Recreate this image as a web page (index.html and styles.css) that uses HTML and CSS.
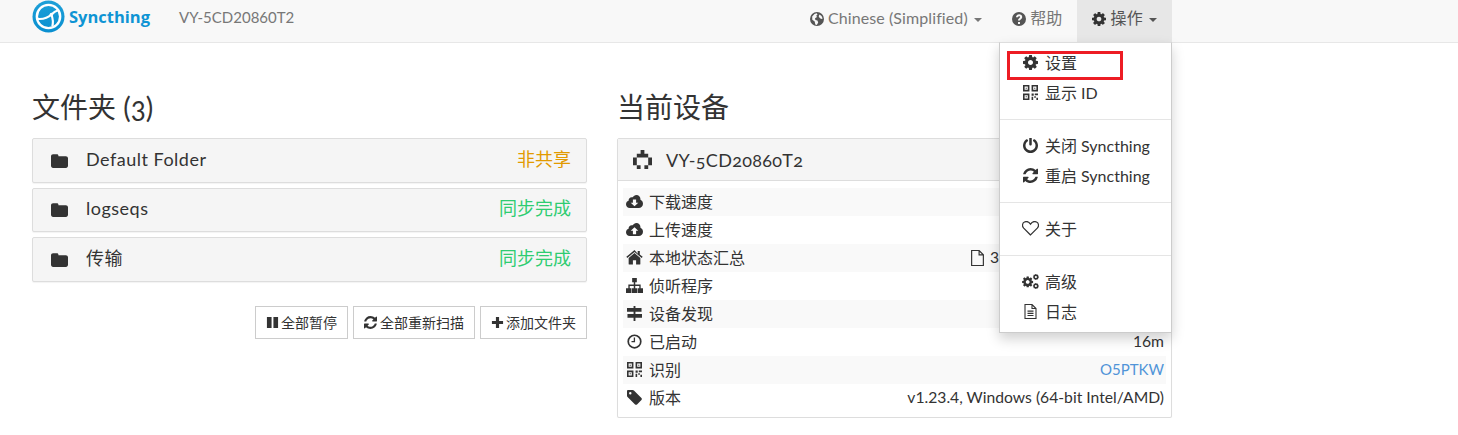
FILE: index.html
```html
<!DOCTYPE html>
<html>
<head>
    <title>Syncthing</title>
    <meta name="viewport" content="width=device-width, initial-scale=1">
    <link rel="stylesheet" href="styles.css">
</head>
<body>
    <svg class="defs" width="0" height="0">
        <symbol id="i-gear" viewBox="128 128 1536 1536"><path d="M1152 896q0-106-75-181t-181-75-181 75-75 181 75 181 181 75 181-75 75-181zm512-109v222q0 12-8 23t-20 13l-185 28q-19 54-39 91 35 50 107 138 10 12 10 25t-9 23q-27 37-99 108t-94 71q-12 0-26-9l-138-108q-44 23-91 38-16 136-29 186-7 28-36 28h-222q-14 0-24.500-8.500t-11.500-21.500l-28-184q-49-16-90-37l-141 107q-10 9-25 9-14 0-25-11-126-114-165-168-7-10-7-23 0-12 8-23 15-21 51-66.500t54-70.500q-27-50-41-99l-183-27q-13-2-21-12.500t-8-23.500v-222q0-12 8-23t19-13l186-28q14-46 39-92-40-57-107-138-10-12-10-24 0-10 9-23 26-36 98.500-107.500t94.500-71.500q13 0 26 10l138 107q44-23 91-38 16-136 29-186 7-28 36-28h222q14 0 24.500 8.500t11.500 21.500l28 184q49 16 90 37l142-107q9-9 24-9 13 0 25 10 129 119 165 170 7 8 7 22 0 12-8 23-15 21-51 66.500t-54 70.500q26 50 41 98l183 28q13 2 21 12.500t8 23.500z"/></symbol>
        <symbol id="i-power" viewBox="128 128 1536 1536"><path d="M1664 896q0 156-61 298t-164 245-245 164-298 61-298-61-245-164-164-245-61-298q0-182 80.500-343t226.500-270q43-32 95.500-25t83.500 50q32 42 24.500 94.500t-49.500 84.500q-98 74-151.500 181t-53.500 228q0 104 40.500 198.500t109.500 163.500 163.500 109.500 198.500 40.500 198.500-40.500 163.500-109.500 109.500-163.500 40.500-198.500q0-121-53.500-228t-151.500-181q-42-32-49.500-84.500t24.500-94.500q31-43 84-50t95 25q146 109 226.500 270t80.500 343zm-640-768v640q0 52-38 90t-90 38-90-38-38-90v-640q0-52 38-90t90-38 90 38 38 90z"/></symbol>
        <symbol id="i-refresh" viewBox="128 128 1536 1536"><path d="M1639 1056q0 5-1 7-64 268-268 434.500t-478 166.500q-146 0-282.500-55t-243.500-157l-129 129q-19 19-45 19t-45-19-19-45v-448q0-26 19-45t45-19h448q26 0 45 19t19 45-19 45l-137 137q71 66 161 102t187 36q134 0 250-65t186-179q11-17 53-117 8-23 30-23h192q13 0 22.500 9.500t9.500 22.500zm25-800v448q0 26-19 45t-45 19h-448q-26 0-45-19t-19-45 19-45l138-138q-148-137-349-137-134 0-250 65t-186 179q-11 17-53 117-8 23-30 23h-199q-13 0-22.500-9.500t-9.500-22.500v-7q65-268 270-434.500t480-166.500q146 0 284 55.500t245 156.500l130-129q19-19 45-19t45 19 19 45z"/></symbol>
        <symbol id="i-qr" viewBox="1 1 14 14"><path fill-rule="evenodd" d="M1 1h6v6H1zM2.500 2.500v3h3v-3zM9 1h6v6H9zM10.500 2.500v3h3v-3zM1 9h6v6H1zM2.500 10.500v3h3v-3z"/><path d="M3.500 3.500h1v1h-1zM11.500 3.500h1v1h-1zM3.500 11.500h1v1h-1zM9 9h2v2H9zM12 9h3v1.500h-3zM9 12h1.500v3H9zM11.500 11.500h1.500v1.500h-1.500zM13.500 13h1.500v2h-1.500z"/></symbol>
        <symbol id="i-heart" viewBox="0.500 2 15 13"><path fill="none" stroke="currentColor" stroke-width="1.100" d="M8 14.200 2 8.200C.3 6.400.7 3.700 2.700 2.800c1.900-.9 3.900-.2 5.300 1.800 1.400-2 3.400-2.700 5.300-1.800 2 .9 2.400 3.600.7 5.400z"/></symbol>
        <symbol id="i-cogs" viewBox="0 0 18 16"><use href="#i-gear" x="0" y="2.500" width="12" height="12"/><use href="#i-gear" x="11.500" y="0" width="6.500" height="6.500"/><use href="#i-gear" x="11.500" y="9.500" width="6.500" height="6.500"/></symbol>
        <symbol id="i-filetext" viewBox="2 0.500 12 15"><path fill="none" stroke="currentColor" stroke-width="1.100" d="M2.500 1h7l4 4v10h-11zM9.500 1v4h4"/><path d="M5 7h6v1.200H5zM5 9.200h6v1.200H5zM5 11.400h6v1.200H5z"/></symbol>
        <symbol id="i-file" viewBox="2 0.500 12 15"><path fill="none" stroke="currentColor" stroke-width="1.100" d="M2.500 1h7l4 4v10h-11zM9.500 1v4h4"/></symbol>
        <symbol id="i-folder" viewBox="0 0 16 14"><path d="M2 1h3.500c1 0 1.500.5 1.500 1.500V3h7c1 0 2 .8 2 1.800V12c0 1-.8 2-2 2H2c-1.200 0-2-1-2-2V3c0-1.200.8-2 2-2z"/></symbol>
        <symbol id="i-down" viewBox="0 0 18 14"><path fill-rule="evenodd" d="M4 14C1.800 14 0 12.300 0 10c0-1.800 1-3.200 2.700-3.800C2.700 3.500 4.800 2 7 2.600 8 1 9.400 0 11 0c2.500 0 4.300 1.900 4.300 4.400v.7C17 5.800 18 7.500 18 9.500c0 2.500-2 4.500-4.500 4.500zM7.300 5v3.300H5L9 12l4-3.700h-2.300V5z"/></symbol>
        <symbol id="i-up" viewBox="0 0 18 14"><path fill-rule="evenodd" d="M4 14C1.800 14 0 12.300 0 10c0-1.800 1-3.200 2.700-3.800C2.700 3.500 4.800 2 7 2.600 8 1 9.400 0 11 0c2.500 0 4.300 1.900 4.300 4.400v.7C17 5.800 18 7.500 18 9.500c0 2.500-2 4.500-4.500 4.500zM9 4.500 5 8.200h2.300V12h3.400V8.200H13z"/></symbol>
        <symbol id="i-home" viewBox="0 0 16 14"><path d="M8 2.800 2.500 7.500V13c0 .4.300.7.700.7h3.300V9.500h3V13.700h3.300c.4 0 .7-.3.700-.7V7.500z"/><path d="M8 0 .3 6.400l.9 1L8 1.900l6.800 5.500.9-1-2.700-2.200V.8h-2v2.700z"/></symbol>
        <symbol id="i-sitemap" viewBox="0 0 16 14"><path d="M5.800 0h4.400v4H8.700v2h5.100v3.500H16V14h-5V9.500h1.500V7.500h-3.800v2H10.500V14h-5V9.500h1.800v-2H3.500v2H5V14H0V9.500h2.200V6h5.100V4H5.800z"/></symbol>
        <symbol id="i-signs" viewBox="0 0 16 16"><path d="M7 0h2v2h6.500v4H9v2.500h7v4H9V16H7v-3.500H.5v-4H7V6H0V2h7z"/></symbol>
        <symbol id="i-clock" viewBox="0 0 16 16"><circle cx="8" cy="8" r="6.700" fill="none" stroke="currentColor" stroke-width="1.800"/><path d="M7.200 3.800h1.400v5H4.800V7.500h2.400z"/></symbol>
        <symbol id="i-tag" viewBox="0 0 16 16"><path fill-rule="evenodd" d="M0 1.200C0 .5.500 0 1.200 0H6c.5 0 1 .2 1.400.6l8 8c.6.6.6 1.500 0 2.100l-4.700 4.700c-.6.600-1.500.600-2.100 0l-8-8C.2 7 0 6.500 0 6zM3.500 2.200a1.300 1.300 0 1 0 0 2.600 1.300 1.300 0 0 0 0-2.600z"/></symbol>
        <symbol id="i-pause" viewBox="0 0 14 14"><path d="M1 1h5v12H1zM8 1h5v12H8z"/></symbol>
        <symbol id="i-plus" viewBox="0 0 14 14"><path d="M5.300 1h3.400v4.300H13v3.400H8.700V13H5.300V8.700H1V5.300h4.300z"/></symbol>
        <symbol id="i-globe" viewBox="1 1 14 14"><path fill-rule="evenodd" d="M8 1a7 7 0 1 0 0 14A7 7 0 0 0 8 1zM3.200 5.500 5.500 3l2.200-.7.800 1.300-1.300 1.200.8 1.200L6 7.200l.4 1.800 2 .6.800 1.800-1.400 2.500-1.500-.4-.6-3-2.400-1.700zM10.500 3.500l2 1.500 1.200 2.500-1.500.5-1.700-1.300-.8-1.500z"/></symbol>
        <symbol id="i-help" viewBox="1 1 14 14"><path fill-rule="evenodd" d="M8 1a7 7 0 1 0 0 14A7 7 0 0 0 8 1zM7 11h2v2H7zM5 6.200C5.200 4.400 6.500 3.300 8.200 3.300c1.700 0 3 1.100 3 2.700 0 1.300-.8 1.900-1.500 2.400-.5.300-.7.500-.7 1.100H7c0-1.200.5-1.800 1.200-2.300.6-.4.900-.7.900-1.100 0-.5-.4-.9-1-.9-.7 0-1 .4-1.200 1z"/></symbol>
    </svg>

    <nav class="navbar">
        <a class="brand">
            <svg class="logo" viewBox="0 0 34 34">
                <defs><linearGradient id="logo-fill" x1="0" y1="0" x2="0" y2="1"><stop offset="0" stop-color="#1ea0d8"/><stop offset="1" stop-color="#0a8fd0"/></linearGradient></defs>
                <circle cx="17" cy="17" r="16.500" fill="url(#logo-fill)"/>
                <circle cx="17" cy="17" r="12" fill="none" stroke="#fff" stroke-width="2.500"/>
                <path d="M5.500 19.500C11 20 16 19 20 15c2-2 5-4 8-5M20 15c1.500 4 2 8 1 12" fill="none" stroke="#fff" stroke-width="2.200"/>
                <circle cx="20" cy="15" r="1.800" fill="#fff"/>
            </svg>
            <span class="brand-name">Syncthing</span>
        </a>
        <span class="device-name">VY-5CD20860T2</span>
        <ul class="nav-right">
            <li class="nav-item"><svg class="icon"><use href="#i-globe"/></svg> Chinese (Simplified) <span class="caret"></span></li>
            <li class="nav-item"><svg class="icon"><use href="#i-help"/></svg> 帮助</li>
            <li class="nav-item open">
                <svg class="icon"><use href="#i-gear"/></svg> 操作 <span class="caret"></span>
                <ul class="menu">
                    <li class="menu-item first"><svg class="icon"><use href="#i-gear"/></svg>设置</li>
                    <li class="menu-item"><svg class="icon"><use href="#i-qr"/></svg>显示 ID</li>
                    <li class="divider"></li>
                    <li class="menu-item"><svg class="icon"><use href="#i-power"/></svg>关闭 Syncthing</li>
                    <li class="menu-item"><svg class="icon"><use href="#i-refresh"/></svg>重启 Syncthing</li>
                    <li class="divider"></li>
                    <li class="menu-item"><svg class="icon"><use href="#i-heart"/></svg>关于</li>
                    <li class="divider"></li>
                    <li class="menu-item"><svg class="icon"><use href="#i-cogs"/></svg>高级</li>
                    <li class="menu-item"><svg class="icon"><use href="#i-filetext"/></svg>日志</li>
                </ul>
            </li>
        </ul>
    </nav>

    <div class="container">
        <section class="col">
            <h1>文件夹 (3)</h1>
            <div class="panel folder">
                <svg class="icon folder-icon"><use href="#i-folder"/></svg>
                <span class="folder-name">Default Folder</span>
                <span class="status unshared">非共享</span>
            </div>
            <div class="panel folder">
                <svg class="icon folder-icon"><use href="#i-folder"/></svg>
                <span class="folder-name">logseqs</span>
                <span class="status synced">同步完成</span>
            </div>
            <div class="panel folder">
                <svg class="icon folder-icon"><use href="#i-folder"/></svg>
                <span class="folder-name">传输</span>
                <span class="status synced">同步完成</span>
            </div>
            <div class="actions">
                <button class="btn btn-pause"><svg class="icon"><use href="#i-pause"/></svg>全部暂停</button>
                <button class="btn"><svg class="icon"><use href="#i-refresh"/></svg>全部重新扫描</button>
                <button class="btn btn-add"><svg class="icon"><use href="#i-plus"/></svg>添加文件夹</button>
            </div>
        </section>

        <section class="col">
            <h1>当前设备</h1>
            <div class="panel device">
                <div class="device-head">
                    <svg class="identicon" viewBox="0 0 5 5"><path d="M2 0h1v1H2zM1 1h3v1H1zM0 2h1v2H0zM4 2h1v2H4zM1 4h1v1H1zM3 4h1v1H3z"/></svg>
                    <span>VY-5CD20860T2</span>
                </div>
                <div class="device-body">
                    <div class="row"><span class="row-label"><svg class="icon"><use href="#i-down"/></svg>下载速度</span></div>
                    <div class="row"><span class="row-label"><svg class="icon"><use href="#i-up"/></svg>上传速度</span></div>
                    <div class="row"><span class="row-label"><svg class="icon"><use href="#i-home"/></svg>本地状态汇总</span><span class="local-state"><svg class="icon"><use href="#i-file"/></svg>3</span></div>
                    <div class="row"><span class="row-label"><svg class="icon"><use href="#i-sitemap"/></svg>侦听程序</span></div>
                    <div class="row"><span class="row-label"><svg class="icon"><use href="#i-signs"/></svg>设备发现</span></div>
                    <div class="row"><span class="row-label"><svg class="icon"><use href="#i-clock"/></svg>已启动</span><span>16m</span></div>
                    <div class="row"><span class="row-label"><svg class="icon"><use href="#i-qr"/></svg>识别</span><a class="link">O5PTKW</a></div>
                    <div class="row"><span class="row-label"><svg class="icon"><use href="#i-tag"/></svg>版本</span><span>v1.23.4, Windows (64-bit Intel/AMD)</span></div>
                </div>
            </div>
        </section>
    </div>
</body>
</html>
```

FILE: styles.css
```css
*, *::after { box-sizing: border-box; }
body { margin: 0; font-family: "Lato", "Noto Sans CJK SC", sans-serif; font-size: 14px; color: #333; background: white; overflow: hidden; }
ul { list-style: none; margin: 0; padding: 0; }
.defs { position: absolute; }
.icon { width: 14px; height: 14px; fill: currentColor; flex: none; vertical-align: -2px; }

/* Navbar */
.navbar { display: flex; align-items: center; height: 43px; padding: 0 0 8px 32px; background: #f8f8f8; border-bottom: 1px solid #e7e7e7; }
.brand { display: flex; align-items: center; gap: 4px; width: 147px; margin-top: -2px; }
.logo { width: 33px; height: 33px; flex: none; }
.brand-name { font-family: "Open Sans", sans-serif; font-weight: 700; font-size: 16.500px; color: #0e94d4; }
.device-name { font-size: 15px; color: #777; }
.nav-right { display: flex; align-self: flex-start; margin-left: auto; margin-right: 286px; }
.nav-item { position: relative; height: 42px; padding: 0 15px; line-height: 35px; font-size: 16px; letter-spacing: .1px; color: #777; white-space: nowrap; }
.nav-item > .icon { color: #555; }
.nav-item.open { background: #e7e7e7; color: #555; }
.nav-item.open > .icon { color: #333; }
.caret { display: inline-block; width: 0; height: 0; margin-left: 2px; vertical-align: 2px; border-top: 4px solid; border-left: 4px solid transparent; border-right: 4px solid transparent; }

/* Dropdown */
.menu { position: absolute; top: 42px; right: 0; width: 173px; padding: 5px 0; background: white; border: 1px solid #ccc; border-top-color: #ddd; box-shadow: 0 6px 12px rgba(0,0,0,0.18); z-index: 10; }
.menu-item { display: flex; align-items: center; height: 30px; padding: 0 0 2px 22px; font-size: 16px; letter-spacing: 0; color: #333; }
.menu-item .icon { width: 17px; height: 15px; margin-right: 6px; color: #333; }
.menu-item.first { position: relative; }
.menu-item.first::after { content: ""; position: absolute; left: 7px; top: 3px; width: 116px; height: 29px; border: 3px solid #ed1c24; }
.divider { height: 1px; margin: 11px 0; background: #e5e5e5; }

/* Columns */
.container { display: grid; grid-template-columns: 555px 555px; gap: 30px; padding: 43px 0 0 32px; }
h1 { margin: 0 0 12px; height: 40px; font-size: 28px; font-weight: 400; line-height: 43px; color: #333; font-feature-settings: "onum"; }
.panel { border: 1px solid #ddd; border-radius: 2px; box-shadow: 0 1px 1px rgba(0,0,0,0.05); background: white; }

/* Folders */
.folder { display: flex; align-items: center; height: 44.500px; margin-bottom: 5px; padding: 0 15px 0 18px; background: #f5f5f5; font-size: 18px; line-height: 24px; }
.folder-icon { width: 17px; height: 15px; margin-right: 18px; }
.folder-name { flex: 1; color: #333; letter-spacing: .5px; margin-top: -3px; }
.status { font-size: 18px; margin-top: -3px; }
.unshared { color: #e29a00; }
.synced { color: #2ecc71; }
.actions { display: flex; justify-content: flex-end; gap: 5px; margin-top: 24px; }
.btn { display: flex; align-items: center; height: 33px; padding: 0 10px; background: white; border: 1px solid #ccc; font: 14px "Lato", "Noto Sans CJK SC", sans-serif; color: #333; }
.btn .icon { width: 13px; height: 13px; margin-right: 3px; }
.btn-pause .icon, .btn-add .icon { margin-right: 2px; }

/* Device panel */
.device-head { display: flex; align-items: center; gap: 14px; height: 42px; padding-left: 15px; background: #f5f5f5; border-bottom: 1px solid #ddd; font-size: 18px; letter-spacing: .3px; font-feature-settings: "onum"; }
.identicon { width: 19px; height: 19px; fill: #333; }
.device-body { padding: 7px 5px 5px; }
.row { display: flex; justify-content: space-between; align-items: center; height: 28px; padding: 0 2px 2px 3px; font-size: 15.700px; }
.row:nth-child(odd) { background: #f9f9f9; }
.row-label { display: flex; align-items: center; font-size: 16px; }
.row-label .icon { width: 17px; height: 15px; margin-right: 6px; }
.local-state { width: 193px; }
.local-state .icon { width: 13px; height: 16px; margin-right: 6px; vertical-align: -3px; }
.link { color: #5094d8; font-size: 15px; }
```
